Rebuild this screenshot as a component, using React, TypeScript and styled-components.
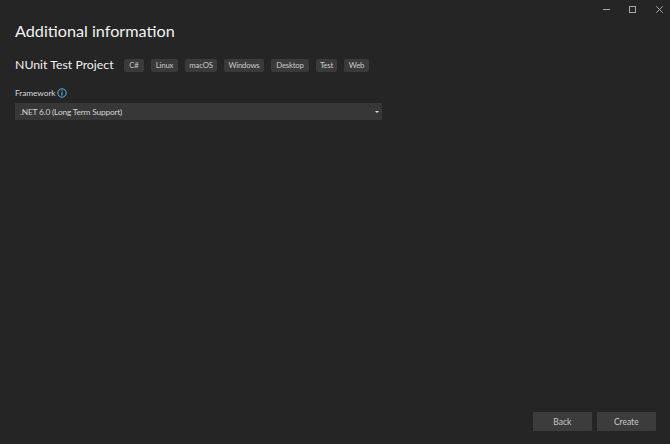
import React from "react";
import styled, { createGlobalStyle } from "styled-components";

const Global = createGlobalStyle`
  html, body { margin: 0; padding: 0; background: #252525; }
  * { box-sizing: border-box; }
`;

const Page = styled.div`
  width: 670px;
  height: 444px;
  display: flex;
  flex-direction: column;
  background: #252525;
  color: #f1f1f1;
  font-family: "Lato", "Open Sans", sans-serif;
  overflow: hidden;
`;

const TitleBar = styled.div`
  height: 18px;
  padding-right: 7.5px;
  display: flex;
  align-items: center;
  justify-content: flex-end;
  gap: 19.5px;
  flex: none;
`;

const WindowButton = styled.svg`
  width: 7px;
  height: 7px;
  color: #a8a8a8;
`;

const Main = styled.main`
  flex: 1;
  display: flex;
  flex-direction: column;
  padding: 0 14px 0 15px;
`;

const Title = styled.h1`
  margin: 0;
  font-size: 16.2px;
  line-height: 25px;
  font-weight: 400;
  color: #f1f1f1;
`;

const ProjectRow = styled.div`
  margin-top: 14px;
  display: flex;
  align-items: center;
  height: 16px;
`;

const ProjectName = styled.h2`
  margin: 0 11px 0 0;
  width: 98px;
  font-size: 12.3px;
  font-weight: 400;
  line-height: 16px;
  color: #f1f1f1;
  white-space: nowrap;
`;

const Tags = styled.div`
  display: flex;
  gap: 7px;
`;

const Tag = styled.span<{ $w: number }>`
  width: ${(p) => p.$w}px;
  height: 13px;
  display: flex;
  align-items: center;
  justify-content: center;
  border-radius: 2px;
  background: #3a3a3a;
  color: #c8c8c8;
  font-size: 7.8px;
  letter-spacing: -0.2px;
`;

const FieldLabel = styled.div`
  margin-top: 13px;
  display: flex;
  align-items: center;
  gap: 3px;
  height: 13px;
  font-size: 8.3px;
  letter-spacing: -0.05px;
  color: #d6d6d6;
`;

const FieldText = styled.span`
  width: 39px;
  white-space: nowrap;
`;

const InfoIcon = styled.svg`
  width: 10px;
  height: 10px;
`;

const Select = styled.div`
  margin-top: 4px;
  width: 367px;
  height: 17px;
  padding: 0 3px 0 5px;
  display: flex;
  align-items: center;
  justify-content: space-between;
  background: #373737;
  color: #d2d2d2;
  font-size: 8.4px;
  letter-spacing: -0.2px;
`;

const Caret = styled.span`
  width: 0;
  height: 0;
  border-left: 2px solid transparent;
  border-right: 2px solid transparent;
  border-top: 2px solid #e0e0e0;
`;

const Footer = styled.footer`
  margin-top: auto;
  padding: 0 0 13px;
  display: flex;
  justify-content: flex-end;
  gap: 4.5px;
`;

const Button = styled.button`
  width: 59.5px;
  height: 19px;
  border: 0;
  border-radius: 1px;
  background: #3c3c3c;
  color: #c9c9c9;
  font-family: inherit;
  font-size: 8.5px;
  padding: 0;
`;

const tags: [string, number][] = [
  ["C#", 20],
  ["Linux", 27],
  ["macOS", 32],
  ["Windows", 40],
  ["Desktop", 38],
  ["Test", 21],
  ["Web", 25],
];

export default function App() {
  return (
    <Page>
      <Global />
      <TitleBar>
        <WindowButton viewBox="0 0 7 7"><path d="M0 3.5h7" stroke="currentColor" fill="none" /></WindowButton>
        <WindowButton viewBox="0 0 7 7"><rect x="0.5" y="0.5" width="6" height="6" stroke="currentColor" fill="none" /></WindowButton>
        <WindowButton viewBox="0 0 7 7"><path d="M0.3 0.3l6.4 6.4M6.7 0.3l-6.4 6.4" stroke="currentColor" fill="none" /></WindowButton>
      </TitleBar>
      <Main>
        <Title>Additional information</Title>
        <ProjectRow>
          <ProjectName>NUnit Test Project</ProjectName>
          <Tags>
            {tags.map(([t, w]) => (
              <Tag key={t} $w={w}>{t}</Tag>
            ))}
          </Tags>
        </ProjectRow>
        <FieldLabel>
          <FieldText>Framework</FieldText>
          <InfoIcon viewBox="0 0 10 10">
            <circle cx="5" cy="5" r="4.2" stroke="#5cb4e8" strokeWidth="1" fill="none" />
            <path d="M5 4.2v3.2" stroke="#5cb4e8" strokeWidth="1.1" />
            <circle cx="5" cy="2.9" r="0.65" fill="#5cb4e8" />
          </InfoIcon>
        </FieldLabel>
        <Select>
          .NET 6.0 (Long Term Support)
          <Caret />
        </Select>
        <Footer>
          <Button>Back</Button>
          <Button>Create</Button>
        </Footer>
      </Main>
    </Page>
  );
}
